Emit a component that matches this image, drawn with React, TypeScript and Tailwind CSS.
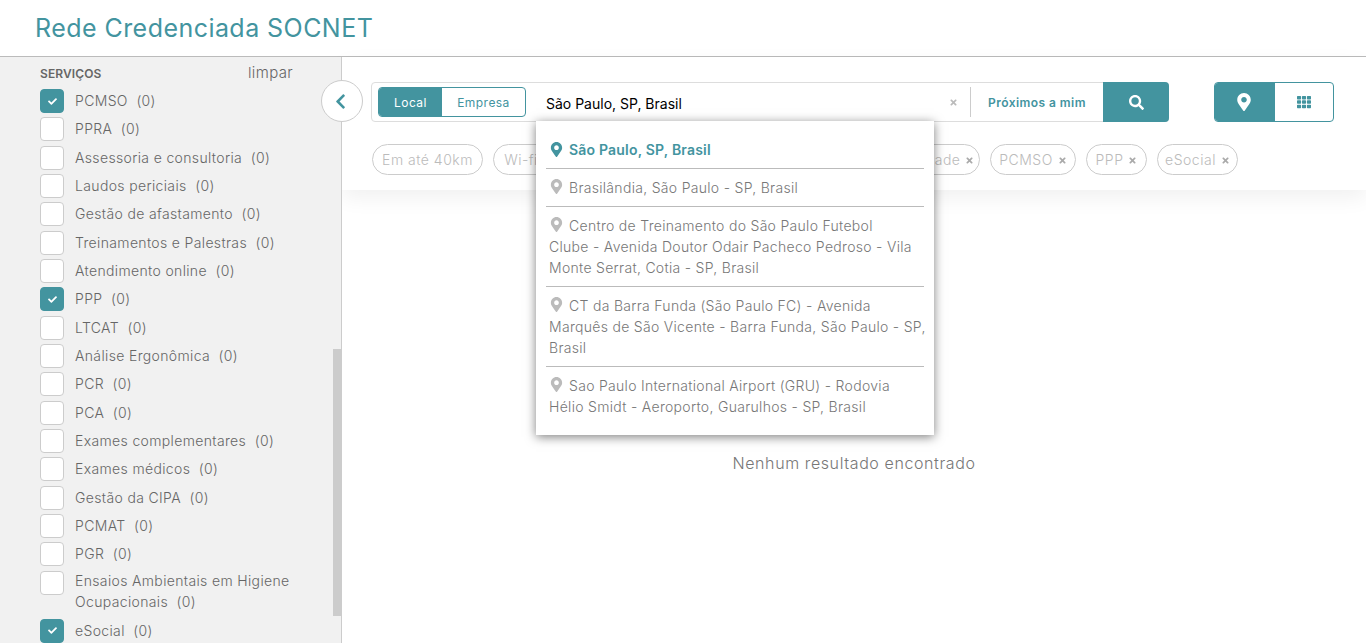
import React from "react";
import { FaCheck, FaChevronLeft, FaMapMarkerAlt, FaSearch, FaTh, FaTimes } from "react-icons/fa";

const services = [
  { name: "PCMSO", checked: true },
  { name: "PPRA" },
  { name: "Assessoria e consultoria" },
  { name: "Laudos periciais" },
  { name: "Gestão de afastamento" },
  { name: "Treinamentos e Palestras" },
  { name: "Atendimento online" },
  { name: "PPP", checked: true },
  { name: "LTCAT" },
  { name: "Análise Ergonômica" },
  { name: "PCR" },
  { name: "PCA" },
  { name: "Exames complementares" },
  { name: "Exames médicos" },
  { name: "Gestão da CIPA" },
  { name: "PCMAT" },
  { name: "PGR" },
  { name: "Ensaios Ambientais em Higiene Ocupacionais", wrapped: true },
  { name: "eSocial", checked: true },
];

const suggestions = [
  ["Brasilândia, São Paulo - SP, Brasil"],
  [
    "Centro de Treinamento do São Paulo Futebol",
    "Clube - Avenida Doutor Odair Pacheco Pedroso - Vila",
    "Monte Serrat, Cotia - SP, Brasil",
  ],
  [
    "CT da Barra Funda (São Paulo FC) - Avenida",
    "Marquês de São Vicente - Barra Funda, São Paulo - SP,",
    "Brasil",
  ],
  [
    "Sao Paulo International Airport (GRU) - Rodovia",
    "Hélio Smidt - Aeroporto, Guarulhos - SP, Brasil",
  ],
];

const Pill = ({ label, width, close = true }: { label: string; width: string; close?: boolean }) => (
  <div className={`flex h-[31px] shrink-0 items-center justify-center gap-[5px] rounded-full border border-[#ccc] text-[14px] font-light tracking-[0.5px] text-[#bbb] ${width}`}>
    <span>{label}</span>
    {close && <FaTimes className="mt-px h-[9px] w-[9px] text-[#aaa]" />}
  </div>
);

const App = () => {
  return (
    <div className="flex h-[643px] flex-col overflow-hidden bg-white font-['Inter',sans-serif] text-[14px] tracking-[0.35px] text-[#666]">
      <header className="flex h-[57px] shrink-0 items-center border-b border-[#bbb] pl-[35px]">
        <h1 className="pt-px text-[25px] tracking-[0.45px] text-[#43949f]">Rede Credenciada SOCNET</h1>
      </header>

      <div className="relative flex min-h-0 flex-1">
        <aside className="relative w-[342px] shrink-0 overflow-hidden border-r border-[#ccc] bg-[#f1f1f1] pl-[40px] pr-[48px] pt-[6px]">
          <div className="mb-[6px] flex h-[20px] items-center justify-between">
            <span className="pt-px text-[12px] font-semibold tracking-[0.1px] text-[#666]">SERVIÇOS</span>
            <span className="pt-px text-[15px] font-light">limpar</span>
          </div>
          <ul>
            {services.map((s) => (
              <li key={s.name} className={`flex gap-[11px] ${s.wrapped ? "pb-[7px]" : "pb-[4.33px]"}`}>
                <span className={`flex h-[24px] w-[24px] shrink-0 items-center justify-center rounded-[4px] border ${s.checked ? "border-[#43949f] bg-[#43949f]" : "border-[#ccc] bg-white"}`}>
                  {s.checked && <FaCheck className="h-[9px] w-[9px] text-white" />}
                </span>
                <span className={`leading-[21px] font-light ${s.wrapped ? "-mt-px" : "pt-px"}`}>
                  {s.name}&nbsp;&nbsp;(0)
                </span>
              </li>
            ))}
          </ul>
          <div className="absolute right-0 top-[292px] h-[267px] w-[8px] bg-[#ccc]" />
        </aside>

        <main className="min-w-0 flex-1">
          <div className="h-[133px] bg-white pl-[29px] pt-[25px] shadow-[0_8px_20px_rgba(0,0,0,0.06)]">
            <div className="flex">
              <div className="flex h-[40px] w-[798px] items-center rounded-[4px] border border-[#ddd] pl-[6px]">
                <div className="flex h-[30px] w-[148px] overflow-hidden rounded-[4px] border border-[#43949f] text-[12px] tracking-[0.45px]">
                  <span className="flex w-[63px] items-center justify-center bg-[#43949f] pt-px text-white">Local</span>
                  <span className="flex flex-1 items-center justify-center pt-px text-[#43949f]">Empresa</span>
                </div>
                <span className="ml-[20px] flex-1 pt-[2px] tracking-[0px] text-black">São Paulo, SP, Brasil</span>
                <FaTimes className="mr-[12px] mt-px h-[9px] w-[9px] text-[#bbb]" />
                <div className="h-[30px] w-px bg-[#ccc]" />
                <span className="w-[132px] pt-px text-center text-[12px] font-semibold tracking-[0.45px] text-[#43949f]">Próximos a mim</span>
                <button className="-mr-px flex h-[40px] w-[66px] items-center justify-center rounded-r-[4px] bg-[#43949f] text-white">
                  <FaSearch className="h-[15px] w-[15px]" />
                </button>
              </div>
              <div className="ml-[45px] flex h-[40px] w-[120px] overflow-hidden rounded-[4px] border border-[#43949f]">
                <span className="flex w-[60px] items-center justify-center bg-[#43949f] pr-[2px] text-white">
                  <FaMapMarkerAlt className="h-[18px] w-[18px]" />
                </span>
                <span className="flex flex-1 items-center justify-center text-[#43949f]">
                  <FaTh className="h-[14px] w-[14px]" />
                </span>
              </div>
            </div>
            <div className="mt-[22px] flex gap-[10px] pl-px">
              <Pill label="Em até 40km" width="w-[111px]" close={false} />
              <Pill label="Wi-fi" width="w-[70px]" />
              <Pill label="Estacionamento" width="w-[271px]" />
              <Pill label="Acessibilidade" width="w-[126px]" />
              <Pill label="PCMSO" width="w-[86px]" />
              <Pill label="PPP" width="w-[61px]" />
              <Pill label="eSocial" width="w-[81px]" />
            </div>
          </div>
          <p className="mt-[261px] text-center text-[16px] font-light tracking-[0.6px] text-[#777]">Nenhum resultado encontrado</p>
        </main>

        <button className="absolute left-[321px] top-[23px] flex h-[42px] w-[42px] items-center justify-center rounded-full border border-[#ccc] bg-white pr-[3px] text-[#43949f]">
          <FaChevronLeft className="h-[17px] w-[17px]" />
        </button>

        <div className="absolute left-[536px] top-[64px] h-[314px] w-[398px] bg-white px-[10px] pt-[18px] tracking-[0.3px] shadow-[0_2px_10px_rgba(0,0,0,0.5)]">
          <div className="flex items-center gap-[5px] border-b border-[#bbb] px-[3px] pb-2 font-semibold leading-[21px] tracking-[0.2px] text-[#43949f]">
            <FaMapMarkerAlt className="h-[15px] w-[15px]" />
            <span>São Paulo, SP, Brasil</span>
          </div>
          {suggestions.map((lines, i) => (
            <div key={lines[0]} className={`whitespace-nowrap px-[3px] py-2 font-light leading-[21px] text-[#777] ${i < suggestions.length - 1 ? "border-b border-[#bbb]" : ""}`}>
              <FaMapMarkerAlt className="mr-[5px] inline h-[15px] w-[15px] align-[-1px] text-[#bbb]" />
              {lines.map((line, j) => (
                <React.Fragment key={line}>
                  {j > 0 && <br />}
                  {line}
                </React.Fragment>
              ))}
            </div>
          ))}
        </div>
      </div>
    </div>
  );
};

export default App;
